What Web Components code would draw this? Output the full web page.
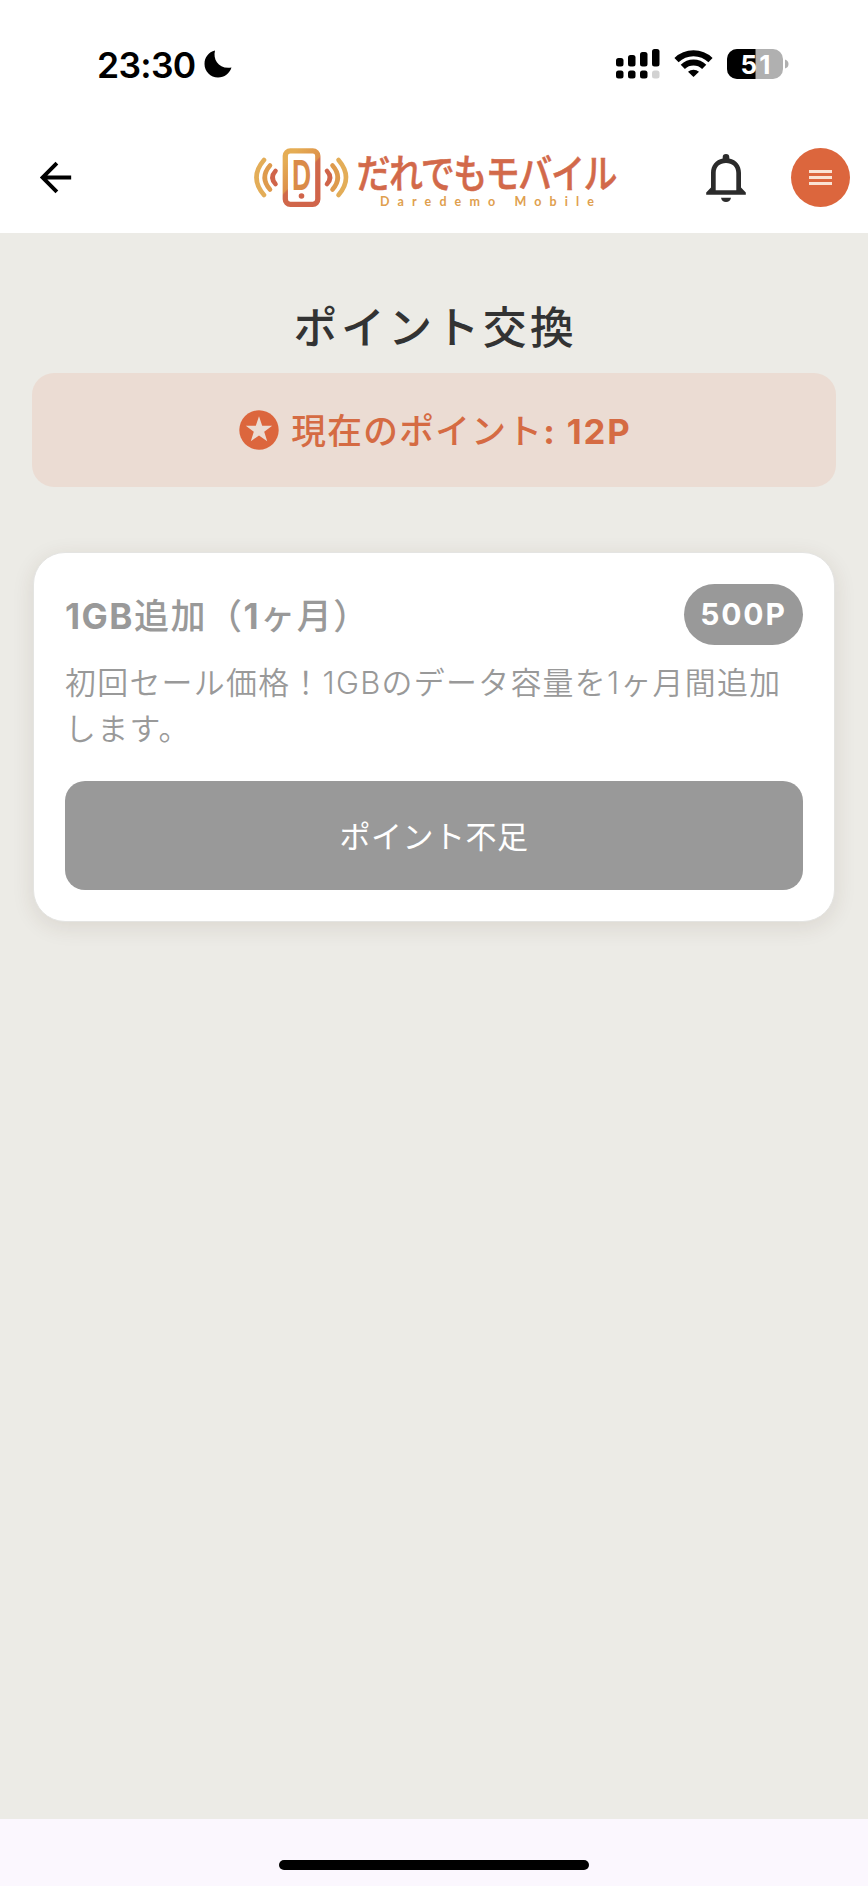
<!DOCTYPE html>
<html lang="ja">
<head>
<meta charset="utf-8">
<title>ポイント交換</title>
<style>
  body {
    margin: 0;
    background: #ecebe6;
    font-family: Inter, "Noto Sans CJK JP", sans-serif;
  }
</style>
</head>
<body>
<point-app>
  <status-bar slot="top" time="23:30" battery="51"></status-bar>
  <app-header slot="top"></app-header>
  <point-balance points="12"></point-balance>
  <reward-card points="500">
    <span slot="name"><b>1GB</b>追加（<b>1</b>ヶ月）</span>
    <span slot="description">初回セール価格！1GBのデータ容量を1ヶ月間追加します。</span>
    <span slot="action">ポイント不足</span>
  </reward-card>
</point-app>

<script>
  (function pointPage(customElements) {
    'use strict';

    class StatusBar extends HTMLElement {
      constructor() {
        super();
        const shadowRoot = this.attachShadow({mode: 'open'});
        shadowRoot.innerHTML = `
          <style>
            :host {
              display: flex;
              justify-content: space-between;
              align-items: center;
              box-sizing: border-box;
              height: 128px;
              padding: 0 79px 0 97px;
              background: #fff;
              color: #000;
            }
            .time {
              display: flex;
              align-items: center;
              gap: 8px;
              font-size: 35.5px;
              font-weight: 600;
              letter-spacing: -0.7px;
              line-height: 44px;
            }
            .time span { padding-top: 3px; }
            svg { display: block; }
          </style>
          <div class="time">
            <span>${this.getAttribute('time')}</span>
            <svg width="28" height="28" viewBox="0 0 28 28">
              <path d="M11 .5C8.600 10 15 19.500 27.500 17.500C25.500 23.500 20.500 27.500 14 27.500C6.500 27.500 .5 21.500 .5 14C.5 7.500 4.500 2 11 .5Z"/>
            </svg>
          </div>
          <svg width="173" height="32" viewBox="0 0 173 32">
            <g>
              <rect x="0" y="10" width="7.500" height="8.500" rx="2.500"/>
              <rect x="12" y="7" width="7.500" height="11.500" rx="2.500"/>
              <rect x="24" y="4" width="7.500" height="14.500" rx="2.500"/>
              <rect x="36" y="1" width="7.500" height="17.500" rx="2.500"/>
              <rect x="0" y="22.500" width="7.500" height="8" rx="2.500"/>
              <rect x="12" y="22.500" width="7.500" height="8" rx="2.500"/>
              <rect x="24" y="22.500" width="7.500" height="8" rx="2.500"/>
              <rect x="36" y="22.500" width="7.500" height="8" rx="2.500" fill="#d2d2d2"/>
            </g>
            <g fill="none" stroke="#000" stroke-width="6">
              <path d="M60.500 12.200A24.500 24.500 0 0 1 94.500 12.200"/>
              <path d="M66.800 18.800A15.500 15.500 0 0 1 88.200 18.800"/>
            </g>
            <path d="M72 23.700A8.500 8.500 0 0 1 83 23.700L77.500 29Z"/>
            <rect x="111" y="1" width="56" height="30" rx="10" fill="#b0b0b0"/>
            <path d="M121 1H139.500V31H121A10 10 0 0 1 111 21V11A10 10 0 0 1 121 1Z"/>
            <path d="M169 11.500Q172.500 12.500 172.500 16T169 20.500Z" fill="#b0b0b0"/>
            <text x="139.500" y="25.500" fill="#fff" font-size="26" font-weight="700" text-anchor="middle" textLength="30">${this.getAttribute('battery')}</text>
          </svg>
        `;
      }
    }
    customElements.define('status-bar', StatusBar);

    class BrandLogo extends HTMLElement {
      constructor() {
        super();
        const shadowRoot = this.attachShadow({mode: 'open'});
        shadowRoot.innerHTML = `
          <style>
            :host { display: block; }
            svg { display: block; overflow: visible; }
          </style>
          <svg width="364" height="64" viewBox="252 146 364 64">
            <defs>
              <linearGradient id="shell" gradientUnits="userSpaceOnUse" x1="286" y1="160" x2="316" y2="190">
                <stop offset="0" stop-color="#e5ad54"/>
                <stop offset=".5" stop-color="#dd9049"/>
                <stop offset=".54" stop-color="#d0694a"/>
                <stop offset="1" stop-color="#d0644a"/>
              </linearGradient>
            </defs>
            <g fill="none" stroke-width="4.600" stroke-linecap="round">
              <path d="M264 160Q249 177.500 264 195" stroke="#e3ad58"/>
              <path d="M270 165.500Q259.500 177.500 270 189.500" stroke="#de9a4c"/>
              <path d="M275.500 171Q269.500 177.500 275.500 184" stroke="#d0644a"/>
              <path d="M338.500 160Q353.500 177.500 338.500 195" stroke="#e3ad58"/>
              <path d="M332.500 165.500Q343 177.500 332.500 189.500" stroke="#de9a4c"/>
              <path d="M327 171Q333 177.500 327 184" stroke="#d0644a"/>
            </g>
            <rect x="285.300" y="150.800" width="32.500" height="53.500" rx="5" fill="none" stroke="url(#shell)" stroke-width="5.300"/>
            <text transform="translate(301.500 189.500) scale(.65 1)" text-anchor="middle" font-size="41" font-weight="700" fill="#da8b49">D</text>
            <circle cx="301.500" cy="196" r="2.800" fill="#d0644a"/>
            <text transform="translate(356.500 187.500) scale(1 1.180)" font-family="Noto Sans CJK JP, sans-serif" font-size="34" font-weight="500" fill="#d2694a" stroke="#d2694a" stroke-width=".5" textLength="261" lengthAdjust="spacing">だれでもモバイル</text>
            <text x="380" y="206" font-family="Lato, sans-serif" font-size="12.500" font-weight="700" fill="#dfa04e" textLength="214" lengthAdjust="spacing">Daredemo Mobile</text>
          </svg>
        `;
      }
    }
    customElements.define('brand-logo', BrandLogo);

    class AppHeader extends HTMLElement {
      constructor() {
        super();
        const shadowRoot = this.attachShadow({mode: 'open'});
        shadowRoot.innerHTML = `
          <style>
            :host {
              display: grid;
              grid-template-columns: 1fr auto 1fr;
              align-items: center;
              box-sizing: border-box;
              height: 105px;
              padding: 0 18px 6px 32px;
              background: #fff;
            }
            :host > * { min-width: 0; }
            brand-logo { margin-left: -14px; }
            svg { display: block; }
            .actions {
              display: flex;
              justify-content: flex-end;
              align-items: center;
              gap: 44px;
            }
            .menu {
              display: flex;
              flex-direction: column;
              justify-content: center;
              align-items: center;
              gap: 3.500px;
              width: 59px;
              height: 59px;
              border-radius: 50%;
              background: #dc663d;
            }
            .menu i {
              width: 23px;
              height: 2.700px;
              background: #fae3d4;
            }
          </style>
          <svg width="47" height="47" viewBox="0 0 24 24">
            <path d="M20 11H7.830l5.590-5.590L12 4l-8 8 8 8 1.410-1.410L7.830 13H20z"/>
          </svg>
          <brand-logo></brand-logo>
          <div class="actions">
            <svg width="42" height="50" viewBox="0 0 42 50">
              <g fill="#2b2b2b">
                <path fill-rule="evenodd" d="M17.700 5.500V4.300a3.300 3.300 0 0 1 6.600 0V5.500C31.500 7 36 12.500 36 20V34.500L40.800 39.500V41.700H1.200V39.500L6 34.500V20C6 12.500 10.500 7 17.700 5.500ZM10.700 37.200H31.300V20C31.300 13.500 27 10 21 10S10.700 13.500 10.700 20Z"/>
                <path d="M16 44.700H26Q25 49 21 49T16 44.700Z"/>
              </g>
            </svg>
            <div class="menu"><i></i><i></i><i></i></div>
          </div>
        `;
      }
    }
    customElements.define('app-header', AppHeader);

    class PointBalance extends HTMLElement {
      constructor() {
        super();
        const shadowRoot = this.attachShadow({mode: 'open'});
        shadowRoot.innerHTML = `
          <style>
            :host { display: block; }
            h1 {
              margin: 0;
              padding-top: 62px;
              color: #333;
              font-size: 43.800px;
              font-weight: 500;
              letter-spacing: 3.500px;
              line-height: 68px;
              height: 78px;
              text-align: center;
              text-indent: 3px;
            }
            .balance {
              display: flex;
              justify-content: center;
              align-items: center;
              gap: 12px;
              height: 114px;
              margin: 0 32px;
              border-radius: 22px;
              background: #ebdcd3;
              color: #d56b43;
              font-size: 34.700px;
              font-weight: 500;
              letter-spacing: 1.300px;
              white-space: nowrap;
            }
            .balance span { padding-bottom: 2px; }
            b { font-weight: 700; letter-spacing: 1.900px; }
            svg { display: block; margin-left: 3px; }
          </style>
          <h1>ポイント交換</h1>
          <div class="balance">
            <svg width="40" height="40" viewBox="0 0 40 40">
              <circle cx="20" cy="20" r="19.700" fill="#dc663d"/>
              <path d="M20 6.300L23.200 15.700H33.200L25.200 21.700L28.200 31.200L20 25.400L11.800 31.200L14.800 21.700L6.800 15.700H16.800Z" fill="#ebdcd3"/>
            </svg>
            <span>現在のポイント<b>: ${this.getAttribute('points')}P</b></span>
          </div>
        `;
      }
    }
    customElements.define('point-balance', PointBalance);

    class RewardCard extends HTMLElement {
      constructor() {
        super();
        const shadowRoot = this.attachShadow({mode: 'open'});
        shadowRoot.innerHTML = `
          <style>
            :host {
              display: block;
              box-sizing: border-box;
              height: 370px;
              margin: 65px 33px 0;
              padding: 31px 31px 0;
              border: 1px solid #e4e4e2;
              border-radius: 32px;
              background: #fff;
              box-shadow: 0 5px 22px rgba(70, 50, 30, .11);
              color: #999;
            }
            .head {
              display: flex;
              justify-content: space-between;
              align-items: center;
              height: 61px;
            }
            .name {
              padding-bottom: 2px;
              font-size: 35px;
              font-weight: 500;
              letter-spacing: 1.500px;
            }
            .price {
              width: 119px;
              border-radius: 31px;
              background: #999;
              color: #fff;
              font-size: 30px;
              font-weight: 700;
              letter-spacing: 1.800px;
              line-height: 61px;
              text-align: center;
            }
            .description {
              margin: 15px 0 0;
              font-size: 30.900px;
              font-weight: 350;
              letter-spacing: 1.300px;
              line-height: 46px;
              height: 121px;
            }
            .action {
              display: block;
              width: 100%;
              height: 109px;
              padding: 0 0 2px;
              border: 0;
              border-radius: 20px;
              background: #999;
              color: #fff;
              font: 400 31px Inter, "Noto Sans CJK JP", sans-serif;
              letter-spacing: .5px;
            }
          </style>
          <div class="head">
            <div class="name"><slot name="name"></slot></div>
            <div class="price">${this.getAttribute('points')}P</div>
          </div>
          <p class="description"><slot name="description"></slot></p>
          <button class="action" disabled><slot name="action"></slot></button>
        `;
      }
    }
    customElements.define('reward-card', RewardCard);

    class PointApp extends HTMLElement {
      constructor() {
        super();
        const shadowRoot = this.attachShadow({mode: 'open'});
        shadowRoot.innerHTML = `
          <style>
            :host {
              display: flex;
              flex-direction: column;
              width: 868px;
              height: 1886px;
              overflow: hidden;
            }
            main { flex: 1; }
            footer {
              display: flex;
              justify-content: center;
              box-sizing: border-box;
              height: 67px;
              padding-top: 41px;
              background: #fbf7fe;
            }
            footer div {
              width: 310px;
              height: 10px;
              border-radius: 5px;
              background: #000;
            }
          </style>
          <slot name="top"></slot>
          <main><slot></slot></main>
          <footer><div></div></footer>
        `;
      }
    }
    customElements.define('point-app', PointApp);
  })(window.customElements);
</script>
</body>
</html>
